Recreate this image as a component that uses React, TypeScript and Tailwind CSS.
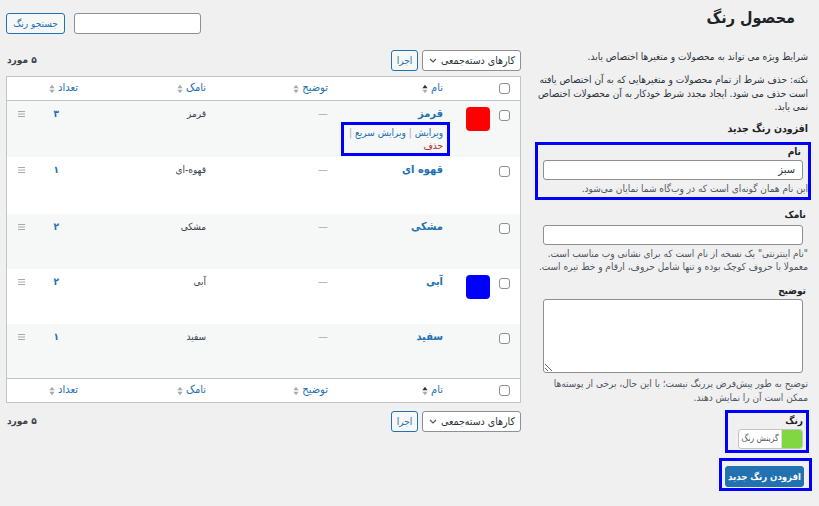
import type { ReactNode } from "react";

interface ColorRow {
  name: string;
  slug: string;
  count: string;
  color: string | null;
  height: string;
  actions?: boolean;
}

const rows: ColorRow[] = [
  { name: "قرمز", slug: "قرمز", count: "۳", color: "#ff0000", height: "h-[56px]", actions: true },
  { name: "قهوه ای", slug: "قهوه-ای", count: "۱", color: null, height: "h-[57px]" },
  { name: "مشکی", slug: "مشکی", count: "۲", color: null, height: "h-[55px]" },
  { name: "آبی", slug: "آبی", count: "۲", color: "#0000ff", height: "h-[55px]" },
  { name: "سفید", slug: "سفید", count: "۱", color: null, height: "h-[54px]" },
];

const cols = "grid grid-cols-[28px_42px_115px_122px_128px_45px_1fr]";

const Checkbox = () => (
  <span className="block w-[11px] h-[11px] rounded-[3px] border border-[#8c8f94] bg-white" />
);

const SortIcon = ({ active }: { active?: boolean }) => (
  <svg width="6" height="10" viewBox="0 0 6 10" className="shrink-0">
    <path d="M3 0.8 L5.6 4.2 H0.4 Z" fill={active ? "#2c3338" : "#a7aaad"} />
    <path d="M3 9.2 L5.6 5.8 H0.4 Z" fill="#a7aaad" />
  </svg>
);

const DragHandle = () => (
  <svg width="7" height="6" viewBox="0 0 7 6">
    <path d="M0 0.5 H7 M0 3 H7 M0 5.5 H7" stroke="#a7aaad" strokeWidth="1" />
  </svg>
);

const HeadCell = ({ label, active }: { label: string; active?: boolean }) => (
  <div className="flex items-center gap-[3px] pr-[7px]">
    <span className="text-[11px] text-[#2271b1]">{label}</span>
    <SortIcon active={active} />
  </div>
);

const HeaderRow = ({ border }: { border: string }) => (
  <div className={`${cols} items-center h-[24px] bg-white ${border} border-[#c3c4c7]`}>
    <div className="flex justify-center pr-[3px]">
      <Checkbox />
    </div>
    <div />
    <HeadCell label="نام" active />
    <HeadCell label="توضیح" />
    <HeadCell label="نامک" />
    <HeadCell label="تعداد" />
    <div />
  </div>
);

const BulkBar = ({ className = "" }: { className?: string }) => (
  <div className={`flex items-start ${className}`}>
    <div className="flex items-center h-[21px] w-[99px] pr-[5px] pl-[6px] justify-between rounded-[3px] border border-[#8c8f94] bg-white">
      <span className="text-[10.5px] text-[#2c3338] whitespace-nowrap">کارهای دسته‌جمعی</span>
      <svg width="8" height="5" viewBox="0 0 8 5" className="shrink-0">
        <path d="M1 1 L4 4 L7 1" stroke="#50575e" strokeWidth="1.2" fill="none" />
      </svg>
    </div>
    <button className="mr-[4px] h-[21px] w-[27px] rounded-[3px] border border-[#2271b1] bg-[#f6f7f7] text-[10px] text-[#2271b1]">
      اجرا
    </button>
    <span className="mr-auto pt-[2px] pl-[1px] text-[10px] font-bold text-[#3c434a]">۵ مورد</span>
  </div>
);

const Label = ({ children, className = "" }: { children: ReactNode; className?: string }) => (
  <div className={`text-[10px] leading-[12px] font-bold text-[#1d2327] ${className}`}>{children}</div>
);

const Hint = ({ children, className = "" }: { children: ReactNode; className?: string }) => (
  <div className={`text-[10px] text-[#50575e] whitespace-nowrap ${className}`}>{children}</div>
);

export default function App() {
  return (
    <div
      dir="rtl"
      className="w-[819px] h-[506px] overflow-hidden bg-[#f0f0f1] flex pr-[8px] pl-[6px] gap-[14px] font-['DejaVu_Sans_Condensed','DejaVu_Sans',sans-serif] text-[#3c434a]"
    >
      {/* form column */}
      <div className="w-[276px] shrink-0 flex flex-col">
        <h1 className="pt-[6px] pr-[16px] text-[16px] leading-[24px] font-bold text-[#1d2327]">محصول رنگ</h1>
        <p className="mt-[20px] pr-[3px] text-[10px] leading-[14px] text-[#2c3338] whitespace-nowrap">
          شرایط ویژه می تواند به محصولات و متغیرها اختصاص یابد.
        </p>
        <p className="mt-[9px] pr-[3px] text-[10px] leading-[13.5px] text-[#2c3338] whitespace-nowrap">
          نکته: حذف شرط از تمام محصولات و متغیرهایی که به آن اختصاص یافته
          <br />
          است حذف می شود. ایجاد مجدد شرط خودکار به آن محصولات اختصاص
          <br />
          نمی یابد.
        </p>
        <h2 className="mt-[6px] pr-[3px] text-[10.5px] leading-[16px] font-bold text-[#1d2327]">افزودن رنگ جدید</h2>

        <div className="mt-[6px] border-[3px] border-[#0000ff] px-[5px] pt-[1px] pb-[1px]">
          <Label className="pr-[2px]">نام</Label>
          <input
            defaultValue="سبز"
            className="mt-[2px] block w-full h-[20px] rounded-[3px] border border-[#8c8f94] bg-white px-[7px] text-[11px] text-[#2c3338] outline-none"
          />
          <Hint className="mt-[2px] leading-[14px] -mr-[5px]">این نام همان گونه‌ای است که در وب‌گاه شما نمایان می‌شود.</Hint>
        </div>

        <Label className="mt-[9px] pr-[5px]">نامک</Label>
        <input className="mt-[4px] mx-[8px] block h-[20px] rounded-[3px] border border-[#8c8f94] bg-white outline-none" />
        <Hint className="mt-[2px] pr-[3px] leading-[13px]">
          "نام اینترنتی" یک نسخه از نام است که برای نشانی وب مناسب است.
          <br />
          معمولا با حروف کوچک بوده و تنها شامل حروف، ارقام و خط تیره است.
        </Hint>

        <Label className="mt-[12px] pr-[5px]">توضیح</Label>
        <textarea className="mt-[2px] mx-[8px] block h-[74px] rounded-[3px] border border-[#8c8f94] bg-white outline-none resize" />
        <Hint className="mt-[4px] pr-[3px] leading-[14px]">
          توضیح به طور پیش‌فرض پررنگ نیست؛ با این حال، برخی از پوسته‌ها
          <br />
          ممکن است آن را نمایش دهند.
        </Hint>

        <div className="mt-[5px] mr-[2px] self-start w-[84px] border-[3px] border-[#0000ff] pt-[2px] pb-[1px] pr-[3px] flex flex-col items-start">
          <Label>رنگ</Label>
          <div className="mt-[2px] flex h-[20px] w-[65px] overflow-hidden rounded-[3px] border border-[#c3c4c7] bg-white">
            <span className="w-[20px] bg-[#81d742]" />
            <span className="flex-1 flex items-center justify-center text-[8.5px] text-[#50575e] border-r border-[#dcdcde] whitespace-nowrap">
              گزینش رنگ
            </span>
          </div>
        </div>

        <div className="mt-[5px] -mr-[1px] self-start w-[93px] border-[3px] border-[#0000ff] pt-[2px] pb-[1px] pr-[5px]">
          <button className="h-[21px] w-[79px] rounded-[3px] bg-[#2271b1] border border-[#2271b1] text-[9.5px] font-bold text-white whitespace-nowrap">
            افزودن رنگ جدید
          </button>
        </div>
      </div>

      {/* table column */}
      <div className="w-[515px] shrink-0 flex flex-col">
        <div className="pt-[13px] flex justify-end gap-[9px]">
          <input className="h-[21px] w-[127px] rounded-[3px] border border-[#8c8f94] bg-white outline-none" />
          <button className="h-[21px] w-[59px] rounded-[3px] border border-[#2271b1] bg-[#f6f7f7] text-[10px] text-[#2271b1] whitespace-nowrap">
            جستجو رنگ
          </button>
        </div>

        <BulkBar className="mt-[16px]" />

        <div className="mt-[5px] border border-[#c3c4c7] bg-white">
          <HeaderRow border="border-b" />
          {rows.map((row, i) => (
            <div
              key={row.slug}
              className={`${cols} items-start ${row.height} ${i % 2 === 0 ? "bg-[#f6f7f7]" : "bg-white"}`}
            >
              <div className="flex justify-center pt-[9px] pr-[3px]">
                <Checkbox />
              </div>
              <div className="flex justify-start pt-[6px] pr-[2px]">
                {row.color && <span className="block w-[24px] h-[24px] rounded-[4px]" style={{ backgroundColor: row.color }} />}
              </div>
              <div className="pt-[6px]">
                <div className="pr-[7px] text-[11px] leading-[14px] font-bold text-[#2271b1] whitespace-nowrap">{row.name}</div>
                {row.actions && (
                  <div className="mt-[1px] ml-[6px] border-[3px] border-[#0000ff] pr-[4px] py-[1px] text-[10px] leading-[13px] whitespace-nowrap">
                    <div className="text-[#2271b1]">
                      ویرایش <span className="text-[#a7aaad]">|</span> ویرایش سریع <span className="text-[#a7aaad]">|</span>
                    </div>
                    <div className="text-[#b32d2e]">حذف</div>
                  </div>
                )}
              </div>
              <div className="pt-[6px] pr-[7px] text-[11px] leading-[14px] text-[#a7aaad]">—</div>
              <div className="pt-[6px] pr-[7px] text-[10px] leading-[14px] text-[#3c434a] whitespace-nowrap">{row.slug}</div>
              <div className="pt-[6px] pr-[26px] text-[10px] leading-[14px] font-bold text-[#2271b1]">{row.count}</div>
              <div className="pt-[10px] pl-[11px] flex justify-end">
                <DragHandle />
              </div>
            </div>
          ))}
          <HeaderRow border="border-t" />
        </div>

        <BulkBar className="mt-[8px]" />
      </div>
    </div>
  );
}
